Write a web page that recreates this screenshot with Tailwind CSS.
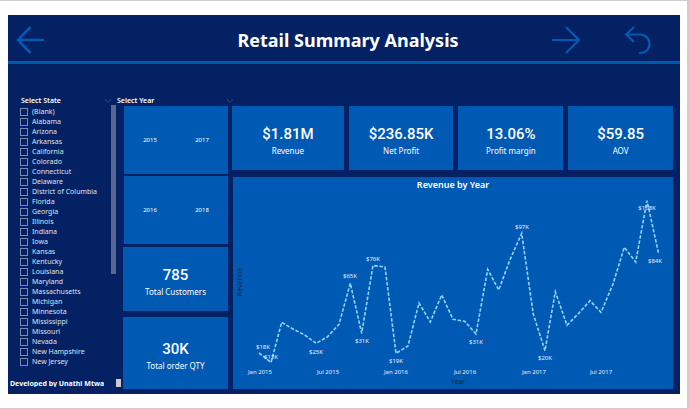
<!DOCTYPE html>
<html lang="en">
<head>
<meta charset="utf-8">
<meta name="viewport" content="width=device-width, initial-scale=1">
<title>Retail Summary Analysis</title>
<script src="https://cdn.jsdelivr.net/npm/@tailwindcss/browser@4"></script>
</head>
<body class="bg-white font-['Noto_Sans','Open_Sans',sans-serif] text-white">
<div class="flex min-h-screen flex-col border-t border-r-2 border-b border-[#cfcdce] pt-3.5 pr-[7px] pb-3.5 pl-2">
  <main class="flex flex-1 flex-col bg-[#032163]">
    <header class="grid h-[49px] grid-cols-[1fr_auto_1fr] items-center border-b-3 border-[#0559b0] pt-1 pl-2">
      <button type="button" aria-label="Back" class="w-7 text-[#0559b0]">
        <svg viewBox="0 0 28 28" class="size-7" fill="none" stroke="currentColor" stroke-width="2.6"><path d="M14.500 1 2 14l12.500 13M2 14h26"/></svg>
      </button>
      <h1 class="text-[18px] leading-6 font-bold">Retail Summary Analysis</h1>
      <nav class="flex justify-end gap-11 pr-7" aria-label="Pages">
        <button type="button" aria-label="Next" class="text-[#0559b0]">
          <svg viewBox="0 0 28 28" class="size-7" fill="none" stroke="currentColor" stroke-width="2.2"><path d="M14 1 27 14 14 27M27 14H0"/></svg>
        </button>
        <button type="button" aria-label="Undo" class="text-[#0559b0]">
          <svg viewBox="0 0 28 28" class="size-7" fill="none" stroke="currentColor" stroke-width="2.2"><path d="M10 1 2 8.500l8 7.500M2 8.500h13.500c6.500 0 10 4.500 10 9.500s-3.500 9-10.500 9"/></svg>
        </button>
      </nav>
    </header>

    <div class="flex flex-1 pt-8 pr-[7px] pb-[5px]">
      <section class="flex w-[108px] shrink-0 flex-col">
        <div class="flex h-[9px] items-center justify-between pr-1 pl-[13px]">
          <h2 class="text-[7px] leading-[9px] font-semibold">Select State</h2>
          <svg viewBox="0 0 8 6" class="h-1.5 w-2" fill="none" stroke="#3a4475"><path d="M1 1l3 3.500L7 1"/></svg>
        </div>
        <div class="flex justify-between">
          <ul id="states" class="pt-0.5 pl-3 text-[7px] leading-[10px] text-[#dfe4f0]"></ul>
          <div class="h-[169px] w-[5px] bg-[#5a6795]"></div>
        </div>
        <div class="mt-auto mb-0.5 flex items-end justify-between">
          <p class="h-[9px] overflow-hidden pl-0.5 text-[7px] leading-[11px] font-bold whitespace-nowrap">Developed by Unathi Mtwa</p>
          <div class="-mr-[5px] h-2 w-[5px] shrink-0 bg-[#c9cbd0]"></div>
        </div>
      </section>

      <section class="flex w-[116px] shrink-0 flex-col">
        <div class="flex h-[9px] items-center justify-between pl-px">
          <h2 class="text-[7px] leading-[9px] font-semibold">Select Year</h2>
          <svg viewBox="0 0 8 6" class="-mr-0.5 h-1.5 w-2" fill="none" stroke="#3a4475"><path d="M1 1l3 3.500L7 1"/></svg>
        </div>
        <div class="mt-px flex flex-1 flex-col pr-1 pl-2 text-center">
          <div class="grid h-[68px] grid-cols-2 bg-[#0059b3] text-[6px]">
            <button type="button">2015</button><button type="button">2017</button>
          </div>
          <div class="mt-0.5 grid h-[68px] grid-cols-2 bg-[#0059b3] text-[6px]">
            <button type="button">2016</button><button type="button">2018</button>
          </div>
          <div class="mt-[3px] -ml-px flex h-16 flex-col items-center justify-center bg-[#0059b3] pt-2">
            <p class="font-[Roboto,sans-serif] text-[15px] leading-[18px] font-medium">785</p>
            <p class="text-[8px] leading-4">Total Customers</p>
          </div>
          <div class="mt-1.5 -ml-px flex flex-1 flex-col items-center justify-center bg-[#0059b3] pt-2">
            <p class="font-[Roboto,sans-serif] text-[15px] leading-[18px] font-medium">30K</p>
            <p class="text-[8px] leading-4">Total order QTY</p>
          </div>
        </div>
      </section>

      <section class="flex min-w-0 flex-1 flex-col pt-2.5">
        <div class="grid h-16 grid-cols-[112fr_105fr_105fr_105fr] gap-[5px] text-center">
          <div class="flex flex-col items-center justify-center bg-[#0059b3] pt-2">
            <p class="font-[Roboto,sans-serif] text-[15px] leading-[18px] font-medium">$1.81M</p>
            <p class="text-[8px] leading-4">Revenue</p>
          </div>
          <div class="flex flex-col items-center justify-center bg-[#0059b3] pt-2">
            <p class="font-[Roboto,sans-serif] text-[15px] leading-[18px] font-medium">$236.85K</p>
            <p class="text-[8px] leading-4">Net Profit</p>
          </div>
          <div class="flex flex-col items-center justify-center bg-[#0059b3] pt-2">
            <p class="font-[Roboto,sans-serif] text-[15px] leading-[18px] font-medium">13.06%</p>
            <p class="text-[8px] leading-4">Profit margin</p>
          </div>
          <div class="flex flex-col items-center justify-center bg-[#0059b3] pt-2">
            <p class="font-[Roboto,sans-serif] text-[15px] leading-[18px] font-medium">$59.85</p>
            <p class="text-[8px] leading-4">AOV</p>
          </div>
        </div>
        <div class="mt-[7px] ml-px flex flex-1 flex-col bg-[#0059b3]">
          <h2 class="h-4 text-center text-[9px] leading-4 font-semibold">Revenue by Year</h2>
          <svg viewBox="233 193 440 196" class="w-full" role="img" aria-label="Revenue by month">
            <polyline fill="none" stroke="#8fd6ff" stroke-width="1.600" stroke-dasharray="3.500 1.700" points="259,353 271,362.500 281.700,322.300 293,329 304.700,335 316.300,343.300 327.300,337 339,324.300 350.300,283.300 361.700,333.300 373,265.500 385,267 396,353.300 408,346 419,303 430.300,322 441.700,295 453,319.300 464.700,321.300 476,334 487.700,269.300 498.700,290 510,259.700 521.700,233.300 533.300,314.300 545,350.700 555.300,291.700 567,325.300 578.700,313.300 590,300.700 601,312.300 613,284 624.300,247.300 635.700,262 647,200.700 658.700,254"/>
            <g fill="#e4f0ff" text-anchor="middle" class="text-[6px]">
              <text x="263" y="349">$18K</text>
              <text x="271" y="359">$12K</text>
              <text x="316" y="354">$25K</text>
              <text x="350" y="278">$65K</text>
              <text x="362" y="343">$31K</text>
              <text x="373" y="261">$76K</text>
              <text x="396" y="363">$19K</text>
              <text x="476" y="344">$31K</text>
              <text x="522" y="229">$97K</text>
              <text x="545" y="360">$20K</text>
              <text x="647" y="210">$108K</text>
              <text x="655" y="263">$84K</text>
              <text x="260" y="374">Jan 2015</text>
              <text x="328" y="374">Jul 2015</text>
              <text x="396" y="374">Jan 2016</text>
              <text x="465" y="374">Jul 2016</text>
              <text x="534" y="374">Jan 2017</text>
              <text x="601" y="374">Jul 2017</text>
            </g>
            <g fill="#15243f" text-anchor="middle" class="text-[7px]">
              <text x="458" y="384">Year</text>
              <text transform="translate(242 282) rotate(-90)">Revenue</text>
            </g>
          </svg>
        </div>
      </section>
    </div>
  </main>
</div>
<script>
  const states = ["(Blank)", "Alabama", "Arizona", "Arkansas", "California", "Colorado", "Connecticut", "Delaware", "District of Columbia", "Florida", "Georgia", "Illinois", "Indiana", "Iowa", "Kansas", "Kentucky", "Louisiana", "Maryland", "Massachusetts", "Michigan", "Minnesota", "Mississippi", "Missouri", "Nevada", "New Hampshire", "New Jersey"];
  document.getElementById("states").innerHTML = states.map(s =>
    `<li><label class="flex h-[10px] items-center gap-1 whitespace-nowrap"><input type="checkbox" class="size-[8px] shrink-0 appearance-none border border-[#7d88ad] checked:bg-white">${s}</label></li>`).join("");
</script>
</body>
</html>
